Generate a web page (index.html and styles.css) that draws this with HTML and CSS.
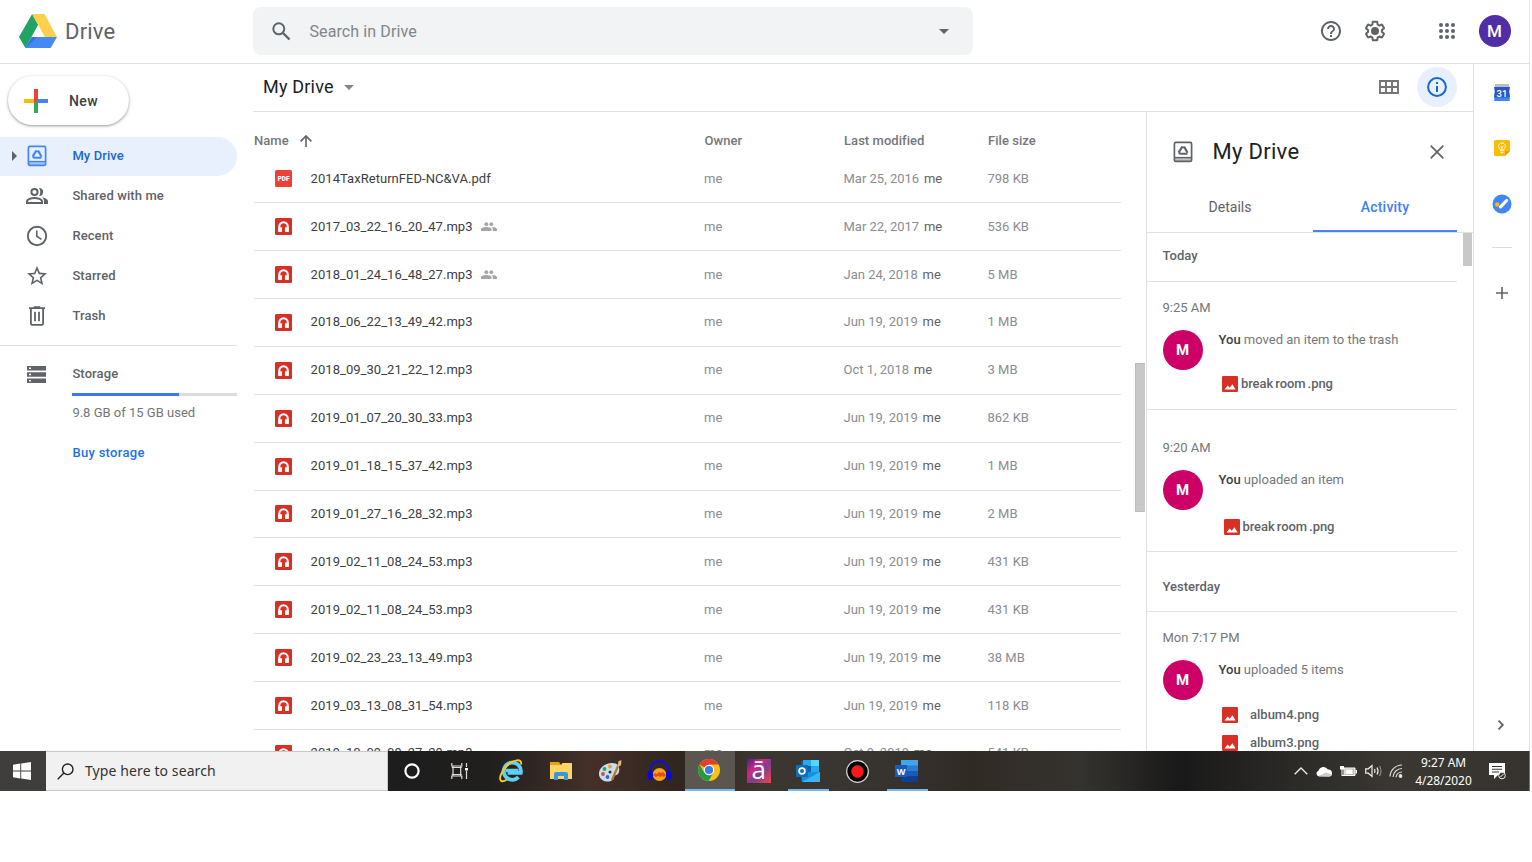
FILE: index.html
```html
<!DOCTYPE html>
<html lang="en">
<head>
<meta charset="utf-8">
<title>My Drive</title>
<link rel="stylesheet" href="styles.css">
</head>
<body>
<svg class="defs" aria-hidden="true">
  <symbol id="audio" viewBox="0 0 16 16"><rect width="16" height="16" rx="1.200" fill="#d93025"/><path d="M4 12.600V8a4 4 0 0 1 8 0v4.600" fill="none" stroke="#fff" stroke-width="1.900"/><rect x="3.100" y="8.600" width="3.500" height="4.600" rx=".6" fill="#fff"/><rect x="9.400" y="8.600" width="3.500" height="4.600" rx=".6" fill="#fff"/></symbol>
  <symbol id="image" viewBox="0 0 16 16"><rect width="16" height="16" rx="1.200" fill="#d93025"/><path d="M2.500 13.500 5.700 9.500 7.700 11.700 10.400 8.200 13.600 13.500z" fill="#fff"/></symbol>
  <symbol id="people" viewBox="0 0 16 9"><g fill="#a5a5a5"><circle cx="5.300" cy="2.200" r="1.900"/><circle cx="10.300" cy="2.200" r="1.900"/><path d="M0 9V7.300C0 5.700 3 5 5.300 5s5.200.7 5.200 2.300V9zM11 5c2.300 0 5 .8 5 2.300V9h-4.300V7.300c0-1-.5-1.700-1.200-2.300z"/></g></symbol>
  <symbol id="drivebox" viewBox="0 0 20 22"><g fill="none" stroke="currentColor" stroke-width="1.700"><rect x="1.400" y="1.400" width="17.200" height="19" rx="1.500"/><path d="M1.500 16.600h17" stroke-width="1.400"/><path d="m9.300 5.600-3.700 6M11 5.600l3.600 6.200M7.300 12.800h7.200M6 11.500l1.200 1.600M8.400 6.200h2.200" stroke-width="2.100"/></g><path d="M2 17h16v3H2z" fill="currentColor" opacity=".4"/></symbol>
</svg>

<div class="screen">
  <header class="header">
    <div class="brand">
      <svg width="38" height="34" viewBox="56 43 113 101"><path fill="#1fa463" d="m95 43 18 32-38 69-19-33z"/><path fill="#ffd04b" d="M95 43h37l37 68h-36z"/><path fill="#4688f4" d="m94 111-19 33h75l19-33z"/><path fill="#3673e0" d="m94 111-19 33 36-33z"/></svg>
      <span class="brand-name">Drive</span>
    </div>
    <div class="search">
      <svg width="20" height="20" viewBox="0 0 20 20" fill="none" stroke="#5f6368" stroke-width="2"><circle cx="7.800" cy="7.800" r="5.500"/><path d="m12 12 6.500 6.500" stroke-width="2.400"/></svg>
      <span class="search-hint">Search in Drive</span>
      <i class="caret dark"></i>
    </div>
    <div class="header-actions">
      <svg width="22" height="22" viewBox="1 1 22 22" fill="#5f6368"><path d="M11 18h2v-2h-2v2zm1-16C6.480 2 2 6.480 2 12s4.480 10 10 10 10-4.480 10-10S17.520 2 12 2zm0 18c-4.410 0-8-3.590-8-8s3.590-8 8-8 8 3.590 8 8-3.590 8-8 8zm0-14c-2.210 0-4 1.790-4 4h2c0-1.100.9-2 2-2s2 .9 2 2c0 2-3 1.750-3 5h2c0-2.250 3-2.500 3-5 0-2.210-1.790-4-4-4z"/></svg>
      <svg width="22" height="22" viewBox="1 1 22 22" fill="#5f6368"><path d="M13.850 22.250h-3.700c-.74 0-1.360-.54-1.450-1.270l-.27-1.890c-.27-.14-.53-.29-.79-.46l-1.800.72c-.7.26-1.470-.03-1.810-.65L2.200 15.530c-.35-.66-.2-1.440.36-1.880l1.530-1.190c-.01-.15-.02-.3-.02-.46 0-.15.01-.31.02-.46l-1.520-1.190c-.59-.45-.74-1.260-.37-1.880l1.850-3.190c.34-.62 1.110-.9 1.790-.63l1.810.73c.26-.17.52-.32.78-.46l.27-1.910c.09-.7.71-1.250 1.440-1.250h3.700c.74 0 1.360.54 1.450 1.270l.27 1.890c.27.14.53.29.79.46l1.800-.72c.71-.26 1.480.03 1.820.65l1.840 3.180c.36.66.2 1.440-.36 1.880l-1.520 1.190c.01.15.02.3.02.46s-.01.31-.02.46l1.520 1.190c.56.45.72 1.230.37 1.860l-1.860 3.220c-.34.62-1.110.9-1.800.63l-1.800-.72c-.26.17-.52.32-.78.46l-.27 1.910c-.1.680-.72 1.220-1.460 1.220zm-3.230-2h2.760l.37-2.550.53-.22c.44-.18.88-.44 1.340-.78l.45-.34 2.380.96 1.380-2.400-2.030-1.580.07-.56c.03-.26.06-.51.06-.78s-.03-.53-.06-.78l-.07-.56 2.030-1.580-1.390-2.400-2.390.96-.45-.35c-.42-.32-.87-.58-1.330-.77l-.52-.22-.37-2.550h-2.760l-.37 2.550-.53.21c-.44.19-.88.44-1.340.79l-.45.33-2.380-.95-1.390 2.390 2.030 1.580-.07.56a7 7 0 0 0-.06.79c0 .26.02.53.06.78l.07.56-2.030 1.580 1.380 2.400 2.390-.96.45.35c.43.33.86.58 1.330.77l.53.22.38 2.550z"/><circle cx="12" cy="12" r="4"/></svg>
      <svg class="apps" width="16" height="16" viewBox="0 0 16 16" fill="#5f6368"><circle cx="2" cy="2" r="2"/><circle cx="8" cy="2" r="2"/><circle cx="14" cy="2" r="2"/><circle cx="2" cy="8" r="2"/><circle cx="8" cy="8" r="2"/><circle cx="14" cy="8" r="2"/><circle cx="2" cy="14" r="2"/><circle cx="8" cy="14" r="2"/><circle cx="14" cy="14" r="2"/></svg>
      <span class="account">M</span>
    </div>
  </header>

  <div class="body">
    <nav class="sidebar">
      <div class="new-button">
        <svg width="24" height="24" viewBox="0 0 24 24"><path fill="#ea4335" d="M10 0h4v14h-4z"/><path fill="#34a853" d="M10 12h4v12h-4z"/><path fill="#fbbc04" d="M0 10h10v4H0z"/><path fill="#4285f4" d="M14 10h10v4H12z"/><path fill="#ea4335" d="M10 10h4l-4 4z"/></svg>
        <span>New</span>
      </div>
      <div class="nav-item active">
        <i class="expand"></i>
        <svg width="20" height="22"><use href="#drivebox"/></svg>
        <span>My Drive</span>
      </div>
      <div class="nav-item">
        <svg width="24" height="24" viewBox="0 0 24 24" fill="none" stroke="#5f6368" stroke-width="2"><circle cx="9.500" cy="8" r="3.100"/><path d="M2 19v-1.500c0-2.300 4.500-3.500 7.500-3.500s7.500 1.200 7.500 3.500V19z"/><path fill="#5f6368" stroke="none" d="M14 3.900a4.100 4.100 0 1 1 0 8.200c1.700-2.300 1.700-5.900 0-8.200zM16.800 13.300c3 .5 6.200 1.700 6.200 4.200V20h-4v-2.500c0-1.900-.9-3.300-2.200-4.200z"/></svg>
        <span>Shared with me</span>
      </div>
      <div class="nav-item">
        <svg width="22" height="22" viewBox="0 0 22 22" fill="none" stroke="#5f6368" stroke-width="1.900"><circle cx="11" cy="11" r="9.200"/><path d="M10.800 5.500v5.700l4.700 3.100" stroke-width="1.600"/></svg>
        <span>Recent</span>
      </div>
      <div class="nav-item">
        <svg width="20" height="20" viewBox="2 2 20 20" fill="#5f6368"><path d="M22 9.240l-7.190-.62L12 2 9.190 8.630 2 9.240l5.460 4.730L5.820 21 12 17.270 18.180 21l-1.630-7.030L22 9.240zM12 15.400l-3.760 2.270 1-4.280-3.320-2.880 4.380-.38L12 6.100l1.710 4.040 4.380.38-3.320 2.880 1 4.280L12 15.400z"/></svg>
        <span>Starred</span>
      </div>
      <div class="nav-item">
        <svg width="18" height="20" viewBox="0 0 18 20" fill="none" stroke="#5f6368" stroke-width="1.800"><path d="M1 2.200h16M5.800 1.200h6.400M2.900 2.500v15q0 1.300 1.300 1.300h9.600q1.300 0 1.300-1.300v-15M7 5.800v9.500M11 5.800v9.500"/></svg>
        <span>Trash</span>
      </div>
      <section class="storage">
        <div class="storage-title">
          <svg width="19" height="17" viewBox="0 0 19 17"><path fill="#5f6368" d="M0 0h19v4.500H0zM0 6.200h19v4.500H0zM0 12.500h19V17H0z"/><path fill="#fff" d="M2 1.500h2V3H2zM2 7.700h2v1.500H2zM2 14h2v1.500H2z"/></svg>
          <span>Storage</span>
        </div>
        <div class="meter"><div class="meter-fill"></div></div>
        <p class="quota">9.8 GB of 15 GB used</p>
        <a class="buy">Buy storage</a>
      </section>
    </nav>

    <div class="workspace">
      <div class="toolbar">
        <span class="crumb">My Drive</span><i class="caret"></i>
        <div class="toolbar-actions">
          <svg width="20" height="14" viewBox="0 0 20 14" fill="none" stroke="#757575" stroke-width="1.900"><path d="M1 1h18v12H1zM7 1v12M13 1v12M1 7h18"/></svg>
          <span class="info"><svg width="20" height="20" viewBox="0 0 20 20" fill="none" stroke="#1967d2" stroke-width="2"><circle cx="10" cy="10" r="8.900"/><path d="M10 9v6M10 5v2"/></svg></span>
        </div>
      </div>
      <div class="content">
        <main class="files">
          <div class="row head"><span class="name-head">Name <svg width="12" height="12" viewBox="0 0 12 12" fill="none" stroke="#5f6368" stroke-width="1.600"><path d="M6 12V1M.6 6.400 6 1l5.400 5.400"/></svg></span><span>Owner</span><span>Last modified</span><span>File size</span></div>
          <div class="row"><span class="name"><svg width="17" height="17" viewBox="0 0 17 17"><rect width="17" height="17" rx="1.500" fill="#ea4335"/><text class="pdf" x="8.500" y="11" text-anchor="middle">PDF</text></svg>2014TaxReturnFED-NC&amp;VA.pdf</span><span>me</span><span>Mar 25, 2016 <b>me</b></span><span>798 KB</span></div>
          <div class="row"><span class="name"><svg width="17" height="17"><use href="#audio"/></svg>2017_03_22_16_20_47.mp3<svg class="shared" width="16" height="9"><use href="#people"/></svg></span><span>me</span><span>Mar 22, 2017 <b>me</b></span><span>536 KB</span></div>
          <div class="row"><span class="name"><svg width="17" height="17"><use href="#audio"/></svg>2018_01_24_16_48_27.mp3<svg class="shared" width="16" height="9"><use href="#people"/></svg></span><span>me</span><span>Jan 24, 2018 <b>me</b></span><span>5 MB</span></div>
          <div class="row"><span class="name"><svg width="17" height="17"><use href="#audio"/></svg>2018_06_22_13_49_42.mp3</span><span>me</span><span>Jun 19, 2019 <b>me</b></span><span>1 MB</span></div>
          <div class="row"><span class="name"><svg width="17" height="17"><use href="#audio"/></svg>2018_09_30_21_22_12.mp3</span><span>me</span><span>Oct 1, 2018 <b>me</b></span><span>3 MB</span></div>
          <div class="row"><span class="name"><svg width="17" height="17"><use href="#audio"/></svg>2019_01_07_20_30_33.mp3</span><span>me</span><span>Jun 19, 2019 <b>me</b></span><span>862 KB</span></div>
          <div class="row"><span class="name"><svg width="17" height="17"><use href="#audio"/></svg>2019_01_18_15_37_42.mp3</span><span>me</span><span>Jun 19, 2019 <b>me</b></span><span>1 MB</span></div>
          <div class="row"><span class="name"><svg width="17" height="17"><use href="#audio"/></svg>2019_01_27_16_28_32.mp3</span><span>me</span><span>Jun 19, 2019 <b>me</b></span><span>2 MB</span></div>
          <div class="row"><span class="name"><svg width="17" height="17"><use href="#audio"/></svg>2019_02_11_08_24_53.mp3</span><span>me</span><span>Jun 19, 2019 <b>me</b></span><span>431 KB</span></div>
          <div class="row"><span class="name"><svg width="17" height="17"><use href="#audio"/></svg>2019_02_11_08_24_53.mp3</span><span>me</span><span>Jun 19, 2019 <b>me</b></span><span>431 KB</span></div>
          <div class="row"><span class="name"><svg width="17" height="17"><use href="#audio"/></svg>2019_02_23_23_13_49.mp3</span><span>me</span><span>Jun 19, 2019 <b>me</b></span><span>38 MB</span></div>
          <div class="row"><span class="name"><svg width="17" height="17"><use href="#audio"/></svg>2019_03_13_08_31_54.mp3</span><span>me</span><span>Jun 19, 2019 <b>me</b></span><span>118 KB</span></div>
          <div class="row"><span class="name"><svg width="17" height="17"><use href="#audio"/></svg>2019_10_09_09_27_29.mp3</span><span>me</span><span>Oct 9, 2019 <b>me</b></span><span>541 KB</span></div>
        </main>
        <div class="list-scroll"></div>

        <aside class="panel">
          <div class="panel-head">
            <svg width="20" height="22"><use href="#drivebox"/></svg>
            <h2>My Drive</h2>
            <svg class="close" width="14" height="14" viewBox="0 0 14 14" stroke="#666" stroke-width="1.800"><path d="m.7.7 12.600 12.600M13.300.7.7 13.300"/></svg>
          </div>
          <div class="tabs"><span>Details</span><span class="current">Activity</span></div>
          <div class="feed">
            <div class="feed-list">
              <h3 class="day">Today</h3>
              <article class="event first">
                <time>9:25 AM</time>
                <div class="who"><span class="avatar">M</span><p><b>You</b> moved an item to the trash</p></div>
                <div class="file tight"><svg width="16" height="16"><use href="#image"/></svg>break room .png</div>
              </article>
              <article class="event second">
                <time>9:20 AM</time>
                <div class="who"><span class="avatar">M</span><p><b>You</b> uploaded an item</p></div>
                <div class="file tight shifted"><svg width="16" height="16"><use href="#image"/></svg>break room .png</div>
              </article>
              <h3 class="day later">Yesterday</h3>
              <article class="event">
                <time>Mon 7:17 PM</time>
                <div class="who"><span class="avatar">M</span><p><b>You</b> uploaded 5 items</p></div>
                <div class="file"><svg width="16" height="16"><use href="#image"/></svg>album4.png</div>
                <div class="file"><svg width="16" height="16"><use href="#image"/></svg>album3.png</div>
              </article>
            </div>
            <div class="feed-scroll"></div>
          </div>
        </aside>
      </div>
    </div>

    <div class="rail">
      <svg width="18" height="18" viewBox="0 0 18 18"><path fill="#bdbdbd" d="M2 0h14v4H2z"/><path fill="#4285f4" d="M1.500 9h15v8h-15z"/><path fill="#2a56c6" d="M1 3h16l-.8 5 .8 5-1 1H2l-1-1 .8-5z"/><path fill="#4285f4" d="M1.500 13.500h15V17h-15z"/><text class="cal" x="9" y="13" text-anchor="middle">31</text></svg>
      <svg width="18" height="18" viewBox="0 0 18 18"><path fill="#fbbc04" d="M2.500 1h13Q17 1 17 2.500V12l-5 5H2.500Q1 17 1 15.500v-13Q1 1 2.500 1z"/><path fill="#f29900" d="M12 12h5l-5 5z"/><g fill="none" stroke="#fff" stroke-width="1"><path d="M7.300 10.500C4.500 8.500 5.500 4 9 4s4.500 4.500 1.700 6.500v1.200H7.300zM7.500 13.700h3M9 8v3M7.700 7.200 9 8.500l1.300-1.300"/></g></svg>
      <svg width="20" height="20" viewBox="0 0 20 20"><circle cx="10" cy="10" r="9.500" fill="#4285f4"/><circle cx="5.300" cy="10.500" r="2.200" fill="#fbbc04"/><path d="m8.600 12.800 6-6.300" stroke="#fff" stroke-width="3.200" stroke-linecap="round"/></svg>
      <hr>
      <svg class="add" width="12" height="12" viewBox="0 0 12 12" stroke="#5f6368" stroke-width="1.600"><path d="M6 0v12M0 6h12"/></svg>
      <svg class="collapse" width="8" height="10" viewBox="0 0 8 10" fill="none" stroke="#5f6368" stroke-width="1.800"><path d="m1.500.7 4.300 4.300-4.300 4.300"/></svg>
    </div>
  </div>

  <footer class="taskbar">
    <div class="start"><svg width="18" height="18" viewBox="0 0 18 18" fill="#fff"><path d="M0 2.700 7.300 1.600v7H0zM8.200 1.400 18 0v8.600H8.200zM0 9.400h7.300v7L0 15.300zM8.200 9.400H18V18l-9.800-1.400z"/></svg></div>
    <div class="finder"><svg width="17" height="17" viewBox="0 0 17 17" fill="none" stroke="#222" stroke-width="1.400"><circle cx="10.700" cy="6.300" r="5.300"/><path d="M6.900 10.100.7 16.300"/></svg><span>Type here to search</span></div>
    <div class="tasks">
      <span class="task"><svg width="16" height="16" viewBox="0 0 16 16"><circle cx="8" cy="8" r="6.600" fill="none" stroke="#fff" stroke-width="2.200"/></svg></span>
      <span class="task"><svg class="timeline" width="17" height="16" viewBox="0 0 17 16" fill="none" stroke="#ddd" stroke-width="1.200"><path d="M.8 0v3h10V0M.8 16v-3h10v3M2 3v10M9.700 3v10M.8 4.500h10M.8 11.500h10M15.500 0v4M15.500 8v8"/><path d="M14 5h3v2.500h-3z" fill="#fff" stroke="none"/></svg></span>
      <span class="task"><svg width="24" height="24" viewBox="0 0 24 24"><path d="M19.500 18.200A8.600 8.600 0 1 1 21.800 13.800H8.700" fill="none" stroke="#5fd0f5" stroke-width="3.800"/><path d="M6.500 11.500h13" stroke="#5fd0f5" stroke-width="3.500"/><path d="M22 5.500C23.500-1 14 .500 7.500 7 1 13.500-.500 21.500 3 22.200c1.500.3 3.500-.7 5-1.700" fill="none" stroke="#f5c62e" stroke-width="1.900"/></svg></span>
      <span class="task"><svg width="22" height="20" viewBox="0 0 22 20"><path fill="#e5a316" d="M0 1h9l2 3H0z"/><path fill="#ffd567" d="M0 4h11l1.500-2H22v16H0z"/><path fill="#3c96da" d="M4 19v-6q0-2 2-2h10q2 0 2 2v6h-4v-4H8v4z"/></svg></span>
      <span class="task"><svg width="24" height="23" viewBox="0 0 24 23"><path d="M1 15C0 8 7 3 14 3s8 5 7 9-5 3-6 5 0 4-4 4.500S2 20 1 15z" fill="#c5def0"/><circle cx="6.500" cy="9" r="1.900" fill="#39a04a"/><circle cx="12" cy="6.500" r="1.900" fill="#eea02b"/><circle cx="5" cy="14" r="1.900" fill="#d94832"/><circle cx="9.500" cy="17" r="1.900" fill="#3466b8"/><circle cx="12" cy="12" r="1.500" fill="#322c29"/><path d="m14 20 6.500-15" stroke="#bd752c" stroke-width="2.200"/><path d="m19.500 7 1-6 3-.7-.5 5z" fill="#e3b778"/></svg></span>
      <span class="task"><svg width="25" height="22" viewBox="0 0 25 22"><ellipse cx="12.500" cy="14.500" rx="6.800" ry="6.500" fill="#f1a51a"/><path d="m6 15 2-2 2 1 2-2 2 1 2-1 3 3-2 2-2-1-2 1-2-1-2 1-2-1z" fill="#f04419"/><path d="M3.500 13C3 5 7 1.300 12.500 1.300S22 5 21.500 13" fill="none" stroke="#1110d6" stroke-width="2.200"/><ellipse cx="3.200" cy="15.500" rx="2.700" ry="4.800" fill="#0909d8"/><ellipse cx="21.800" cy="15.500" rx="2.700" ry="4.800" fill="#0909d8"/></svg></span>
      <span class="task selected"><svg width="22" height="22" viewBox="0 0 22 22"><circle cx="11" cy="11" r="11" fill="#fbc116"/><path d="M11 11 1.500 5.500A11 11 0 0 1 20.500 5.500H11z" fill="#df3f32"/><path d="M1.500 5.500A11 11 0 0 0 10.500 22l5-8.500L11 11 6.300 13.500z" fill="#26984a"/><circle cx="11" cy="11" r="5.200" fill="#fff"/><circle cx="11" cy="11" r="4.100" fill="#397ee8"/></svg></span>
      <span class="task"><span class="a-logo">ā</span></span>
      <span class="task open"><svg width="24" height="22" viewBox="0 0 24 22"><path fill="#0a5aab" d="M5 1h8v20H5z"/><path fill="#28a8ea" d="M7 0h16v12H7z"/><path fill="#50d9ff" d="M15 0h8v6h-8z"/><path fill="#0364b8" d="M7 6h8v6H7z"/><path fill="#1490df" d="M6 12h18v10H6z"/><path fill="#35b8f1" d="M6 22 24 12v10z"/><path fill="#0f6cbd" d="M0 5h12v12H0z"/><circle cx="6" cy="11" r="2.900" fill="none" stroke="#fff" stroke-width="1.700"/></svg></span>
      <span class="task"><svg width="23" height="23" viewBox="0 0 23 23"><circle cx="11.500" cy="11.500" r="10.800" fill="#000" stroke="#d5d5d5" stroke-width="1.200"/><circle cx="11.500" cy="11.500" r="6.200" fill="#fb1919"/></svg></span>
      <span class="task open"><svg width="24" height="22" viewBox="0 0 24 22"><path fill="#41a5ee" d="M6 0h17v6H6z"/><path fill="#2b7cd3" d="M6 5.500h17V11H6z"/><path fill="#185abd" d="M6 11h17v5.500H6z"/><path fill="#103f91" d="M6 16.500h17V22H6z"/><path fill="#185abd" d="M0 5h12v12H0z"/><text class="word" x="6" y="14.500" text-anchor="middle">W</text></svg></span>
    </div>
    <div class="tray">
      <svg width="14" height="8" viewBox="0 0 14 8" fill="none" stroke="#eee" stroke-width="1.300"><path d="m.7 7.300 6.300-6.300 6.300 6.300"/></svg>
      <svg width="17" height="11" viewBox="0 0 17 11"><path d="M3 10.500a3 3 0 0 1-.5-5.800A5.200 5.200 0 0 1 12 3.500a3.600 3.600 0 0 1 1.500 7z" fill="#fff"/><path d="m2.500 10 8-3.800L16 9q-1 1.500-3 1.500z" fill="#ccc"/></svg>
      <svg width="17" height="12" viewBox="0 0 17 12"><path d="M4 3h11v7.500H4z" fill="#bbb" stroke="#fff"/><path d="M5.500 4.500h7V9h-7z" fill="#fff"/><path d="M15.500 5h1.500v3.500h-1.500zM0 1h4v3.500H0zM1.500 4h1v6h2v1h-3z" fill="#fff"/></svg>
      <svg width="17" height="14" viewBox="0 0 17 14" fill="none" stroke="#eee" stroke-width="1.200"><path d="M.7 4.800h2.600L7 1.500v11L3.300 9.200H.7zM9.500 5q1 2 0 4M12 3.500q2 3.500 0 7"/><path d="M14.500 2q3 5 0 10" stroke="#888"/></svg>
      <svg width="14" height="14" viewBox="0 0 14 14" fill="none" stroke="#ddd" stroke-width="1.200"><path d="M1 12.500A12 12 0 0 1 13 1M4 13a9 9 0 0 1 9-8.500M7 13.300A6 6 0 0 1 13 8"/><circle cx="11.500" cy="12" r="1.300" fill="#fff"/></svg>
      <div class="clock"><span>9:27 AM</span><span>4/28/2020</span></div>
      <svg class="note" width="18" height="17" viewBox="0 0 18 17"><path fill="#fff" d="M0 0h16v12H9l-4 4v-4H0z"/><path d="M3 3.500h10M3 6.200h10M3 9h7" stroke="#333" stroke-width="1.100"/><circle cx="13" cy="12.500" r="3.300" fill="#333" stroke="#eee"/><path d="m11.500 14 3-3" stroke="#fff"/></svg>
    </div>
  </footer>
</div>
</body>
</html>
```
FILE: styles.css
```css
* { box-sizing: border-box; }
body { margin: 0; background: #fff; font: 13px/20px Roboto, sans-serif; color: #5f6368; overflow: hidden; }
svg { display: block; flex: none; }
h2, h3, p { margin: 0; font-weight: 400; }
b { font-weight: 500; }
.defs { position: absolute; width: 0; height: 0; }
.screen { width: 1530px; height: 791px; display: flex; flex-direction: column; overflow: hidden; }

.header { height: 64px; display: flex; flex: none; align-items: flex-start; border-bottom: 1px solid #dfe1e3; border-right: 1px solid #e4e6e8; }
.brand { width: 253px; padding: 14px 0 0 18.500px; display: flex; gap: 8.500px; }
.brand-name { font-size: 22px; line-height: 35px; color: #5f6368; letter-spacing: .2px; }
.search { width: 720px; height: 48px; margin-top: 7px; padding: 0 24px 0 18px; background: #f1f3f4; border-radius: 8px; display: flex; align-items: center; }
.search-hint { margin: 1px 0 0 18.500px; flex: 1; font-size: 16px; color: #80868b; letter-spacing: .1px; }
.caret { border: 5px solid transparent; border-top-color: #80868b; border-bottom: 0; }
.caret.dark { border-top-color: #5f6368; }
.header-actions { flex: 1; padding: 15px 18.500px 0 0; height: 47px; display: flex; align-items: center; justify-content: flex-end; gap: 22px; }
.apps { margin-left: 31px; margin-right: 2px; }
.account { width: 32px; height: 32px; border-radius: 50%; background: #512da8; color: #fff; font: 500 17px/32px Roboto, sans-serif; text-align: center; }

.body { flex: 1; min-height: 0; display: flex; }
.sidebar { width: 253px; flex: none; padding-top: 12px; font-weight: 500; letter-spacing: .1px; }
.new-button { width: 121px; height: 49px; margin: 0 0 11.500px 8px; padding-left: 16px; display: flex; align-items: center; gap: 21px; border-radius: 25px; font-size: 14px; letter-spacing: .4px; color: #3c4043; box-shadow: 0 1px 2px rgba(60,64,67,.35), 0 1px 3px 1px rgba(60,64,67,.15); }
.nav-item { position: relative; width: 237px; height: 39.900px; padding-left: 72.400px; display: flex; align-items: center; }
.nav-item > svg { position: absolute; left: 36.500px; transform: translateX(-50%); }
.nav-item.active { background: #e8f0fe; border-radius: 0 20px 20px 0; color: #1967d2; }
.nav-item.active > svg { color: #4285f4; }
.expand { position: absolute; left: 12px; border: 5px solid transparent; border-left-color: #5f6368; border-right: 0; }
.storage { width: 237px; margin-top: 9.500px; padding: 18px 0 0 72.400px; border-top: 1px solid #dfe1e3; }
.storage-title { margin-left: -45px; display: flex; align-items: center; gap: 26px; }
.meter { height: 3px; margin-top: 9px; background: #dadce0; }
.meter-fill { width: 65%; height: 3px; background: #3b78f0; }
.quota { margin-top: 6.500px; font-weight: 400; color: #757575; letter-spacing: 0; }
.buy { display: block; margin-top: 20px; color: #1a73e8; letter-spacing: .3px; }

.workspace { width: 1220px; flex: none; display: flex; flex-direction: column; }
.toolbar { height: 48px; flex: none; padding: 0 16px 1px 10px; display: flex; align-items: center; border-bottom: 1px solid #dfe1e3; }
.crumb { font-size: 18px; letter-spacing: .2px; color: #202124; margin-right: 10px; }
.toolbar-actions { margin-left: auto; display: flex; align-items: center; gap: 18px; }
.info { width: 40px; height: 40px; border-radius: 50%; background: #e8f0fe; display: grid; place-items: center; }
.content { flex: 1; min-height: 0; display: flex; }
.files { width: 868px; padding: 18.700px 0 0 1px; flex: none; overflow: hidden; }
.row { height: 47.900px; display: grid; grid-template-columns: 450px 139.500px 144px 1fr; align-items: center; border-bottom: 1px solid #e2e2e2; color: #8b8d8f; }
.row b { margin-left: 1.500px; font-weight: 400; color: #5f6368; }
.row.head { height: 24.600px; padding-bottom: 4px; border: 0; font-weight: 500; color: #757779; letter-spacing: .05px; }
.row.head span + span { padding-left: .5px; }
.name-head { display: flex; align-items: center; gap: 11.500px; }
.name { display: flex; align-items: center; gap: 19px; padding-left: 20.600px; color: #3c4043; letter-spacing: .04px; }
.name .shared { margin-left: -11px; }
.pdf { font: 900 6.300px Roboto, sans-serif; fill: #fff; }
.list-scroll { width: 10px; height: 149px; margin: 251px 0 0 14px; background: #c8c8c8; border: 1px solid #bcbcbc; border-width: 1px 0 1px 1px; }

.panel { width: 327px; height: 100%; margin-left: 1px; display: flex; flex-direction: column; border-left: 1px solid #dfe1e3; }
.panel-head { height: 80px; flex: none; padding: 0 29px 0 25.500px; display: flex; align-items: center; }
.panel-head h2 { margin-left: 20px; font-size: 22px; letter-spacing: .3px; color: #202124; }
.close { margin-left: auto; }
.tabs { height: 41px; flex: none; padding-right: 16px; display: grid; grid-template-columns: 166px 1fr; text-align: center; line-height: 31px; font-size: 14px; border-bottom: 1px solid #dfe1e3; }
.tabs span { height: 40px; }
.tabs .current { color: #3b82f6; font-weight: 500; letter-spacing: .2px; border-bottom: 2px solid #4285f4; }
.feed { flex: 1; min-height: 0; display: flex; overflow: hidden; }
.feed-list { width: 310px; color: #757779; }
.feed-scroll { width: 9px; height: 33px; margin-left: 6px; background: #c8c8c8; }
.day { height: 49px; padding: 13px 0 0 15.500px; border-bottom: 1px solid #dfe1e3; font-size: 13px; font-weight: 500; color: #5f6368; }
.day.later { height: 60px; padding-top: 25px; }
.event { padding: 16px 0 0 15.500px; }
.event.first { height: 128px; border-bottom: 1px solid #dfe1e3; }
.event.second { height: 142px; padding-top: 28px; border-bottom: 1px solid #dfe1e3; }
.event time { display: block; }
.event p b { color: #3c4043; }
.who { margin: 12px 0 5px; display: flex; gap: 16px; }
.avatar { width: 40px; height: 40px; border-radius: 50%; background: #cc0066; color: #fff; font: 700 15px/40px Roboto, sans-serif; text-align: center; }
.file { padding-left: 59.500px; height: 20px; margin-bottom: 8px; display: flex; align-items: center; gap: 12px; font-weight: 500; color: #5f6368; }
.file.tight { gap: 3px; margin-top: -1px; letter-spacing: -.08px; word-spacing: -1px; }
.file.shifted { margin-top: 7px; padding-left: 61px; }

.rail { width: 57px; flex: none; display: flex; flex-direction: column; align-items: center; padding-top: 20px; border: 1px solid #e0e2e4; border-width: 0 1px; }
.rail svg { margin-bottom: 37px; }
.rail svg:nth-child(2) { margin-bottom: 37px; }
.rail svg:nth-child(3) { margin-bottom: 33px; }
.rail hr { width: 20px; margin: 0 0 39px; border: 0; border-top: 1px solid #dadce0; }
.rail .collapse { margin: auto 2px 21px 0; }
.cal { font: 500 9.500px Roboto, sans-serif; fill: #fff; }

.taskbar { height: 40px; flex: none; display: flex; color: #fff; font-family: "Noto Sans", sans-serif; background: linear-gradient(90deg, #1d1d1d 388px, #211f1e 490px, #443029 590px, #30261f 680px, #3c3630 760px, #373430 880px, #302a24 970px, #35332f 1080px, #191919 1180px, #282725 1270px, #3b3833 1400px, #36332f 1530px); }
.start { width: 46px; background: #3f3e3d; display: grid; place-items: center; padding-right: 3px; }
.finder { width: 342px; padding-left: 11px; display: flex; align-items: center; gap: 11px; background: #f1f1f1; border: 1px solid #c9c9c9; border-left: 0; color: #333; font-size: 14px; letter-spacing: .1px; }
.tasks { display: flex; width: 544px; }
.task { width: 49.500px; height: 40px; flex: none; display: grid; place-items: center; padding-right: 1px; }
.timeline { margin-right: 4px; }
.task.selected { background: #5b5650; border-bottom: 2px solid #76b9ed; }
.task.open { background: linear-gradient(#76b9ed, #76b9ed) center bottom / 41px 2px no-repeat; }
.a-logo { width: 24px; height: 24px; background: linear-gradient(135deg, #43257d, #d42785 35%, #7b3d91 55%, #f04444); text-align: center; font: 26px/20px "Open Sans", sans-serif; }
.word { font: 700 9px "Open Sans", sans-serif; fill: #fff; }
.tray { margin-left: auto; padding-right: 22px; display: flex; align-items: center; gap: 7.500px; border-right: 1px solid #77736b; }
.clock { width: 62px; margin: 0 7px 0 2px; display: flex; flex-direction: column; font-size: 11.900px; line-height: 18px; text-align: center; white-space: nowrap; }
```
